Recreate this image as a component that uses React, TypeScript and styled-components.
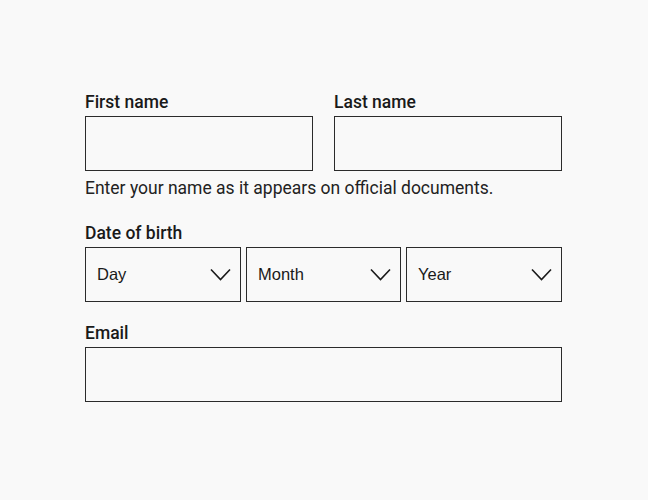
import React from "react";
import styled, { createGlobalStyle } from "styled-components";

const GlobalStyle = createGlobalStyle`
  html, body {
    margin: 0;
    padding: 0;
    background: #f9f9f9;
  }
  body {
    font-family: Roboto, "Liberation Sans", Arial, sans-serif;
    color: #1a1a1a;
  }
`;

const Page = styled.div`
  width: 648px;
  height: 500px;
  box-sizing: border-box;
  padding: 92px 0 0 85px;
`;

const Form = styled.form`
  width: 477px;
  display: flex;
  flex-direction: column;
`;

const Section = styled.div<{ $gap?: number }>`
  margin-top: ${(props) => props.$gap ?? 0}px;
`;

const NameRow = styled.div`
  display: grid;
  grid-template-columns: 228px 228px;
  column-gap: 21px;
`;

const DateRow = styled.div`
  display: grid;
  grid-template-columns: 156px 155px 156px;
  column-gap: 5px;
`;

const Field = styled.div`
  display: flex;
  flex-direction: column;
`;

const Label = styled.label`
  display: block;
  font-size: 17.5px;
  line-height: 20px;
  font-weight: 500;
  color: #1a1a1a;
  margin-bottom: 4px;
`;

const TextInput = styled.input`
  box-sizing: border-box;
  width: 100%;
  height: 55px;
  margin: 0;
  border: 1px solid #2b2b2b;
  background: #f9f9f9;
  font-family: Roboto, sans-serif;
  font-size: 16px;
  padding: 0 10px;
  outline: none;
`;

const Hint = styled.p`
  margin: 7px 0 0;
  font-size: 17.5px;
  line-height: 20px;
  color: #222;
`;

const SelectBox = styled.div`
  box-sizing: border-box;
  height: 55px;
  border: 1px solid #2b2b2b;
  background: #f9f9f9;
  display: flex;
  align-items: center;
  justify-content: space-between;
  padding: 0 9px 0 11px;
  font-family: "Liberation Sans", Arial, sans-serif;
  font-size: 16.5px;
  color: #1a1a1a;
`;

const Chevron = () => (
  <svg width="21" height="13" viewBox="0 0 21 13" fill="none">
    <path d="M1 1.5 L10.5 11.5 L20 1.5" stroke="#1a1a1a" strokeWidth="1.6" />
  </svg>
);

const Select: React.FC<{ placeholder: string }> = ({ placeholder }) => (
  <SelectBox>
    <span>{placeholder}</span>
    <Chevron />
  </SelectBox>
);

export default function App() {
  return (
    <>
      <GlobalStyle />
      <Page>
        <Form onSubmit={(e) => e.preventDefault()}>
          <Section>
            <NameRow>
              <Field>
                <Label htmlFor="first">First name</Label>
                <TextInput id="first" />
              </Field>
              <Field>
                <Label htmlFor="last">Last name</Label>
                <TextInput id="last" />
              </Field>
            </NameRow>
            <Hint>Enter your name as it appears on official documents.</Hint>
          </Section>
          <Section $gap={25}>
            <Label>Date of birth</Label>
            <DateRow>
              <Select placeholder="Day" />
              <Select placeholder="Month" />
              <Select placeholder="Year" />
            </DateRow>
          </Section>
          <Section $gap={21}>
            <Field>
              <Label htmlFor="email">Email</Label>
              <TextInput id="email" />
            </Field>
          </Section>
        </Form>
      </Page>
    </>
  );
}
